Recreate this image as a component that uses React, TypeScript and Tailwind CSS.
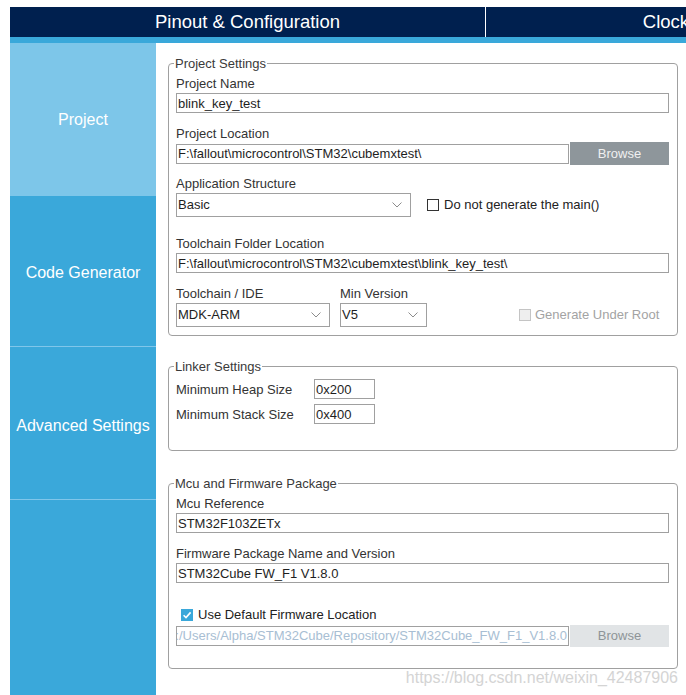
import React from 'react';

const Chevron = () => (
  <svg width="10" height="6" viewBox="0 0 10 6" className="shrink-0">
    <path d="M0.5 0.5 L5 5 L9.5 0.5" stroke="#8c8c8c" strokeWidth="1" fill="none" />
  </svg>
);

const TextBox = ({ value, className = '' }: { value: string; className?: string }) => (
  <div
    className={`flex h-[20px] items-center border border-[#a0a0a0] bg-white px-[1px] text-[13px] leading-[15px] text-[#1e1e1e] whitespace-nowrap overflow-hidden ${className}`}
  >
    {value}
  </div>
);

const Select = ({ value, className = '' }: { value: string; className?: string }) => (
  <div
    className={`flex h-[24px] items-center justify-between border border-[#a0a0a0] bg-white pl-[1px] pr-[8px] text-[13px] text-[#1e1e1e] ${className}`}
  >
    <span>{value}</span>
    <Chevron />
  </div>
);

const Label = ({ children, className = '' }: { children: React.ReactNode; className?: string }) => (
  <div className={`text-[13px] leading-[15px] text-[#333] ${className}`}>{children}</div>
);

const Group = ({
  title,
  className = '',
  children,
}: {
  title: string;
  className?: string;
  children: React.ReactNode;
}) => (
  <fieldset className={`rounded-[4px] border border-[#a0a0a0] pl-[7px] pr-[8px] pt-[5px] ${className}`}>
    <legend className="ml-[-2px] px-[1px] text-[13px] leading-[15px] text-[#3a3a3a]">{title}</legend>
    {children}
  </fieldset>
);

const SideItem = ({
  label,
  className = '',
}: {
  label: string;
  className?: string;
}) => (
  <div className={`flex items-center justify-center text-[16px] text-white ${className}`}>{label}</div>
);

export default function App() {
  return (
    <div className="h-[695px] w-[686px] overflow-hidden bg-white pl-[10px] pt-[7px] font-['Liberation_Sans',Arial,sans-serif]">
      {/* top tabs */}
      <div className="flex h-[30px] w-[951px] bg-[#00204f] text-[18.5px] text-white">
        <div className="flex w-[475px] items-center justify-center">Pinout &amp; Configuration</div>
        <div className="w-px bg-white" />
        <div className="flex w-[475px] items-center justify-center">Clock Configuration</div>
      </div>
      <div className="h-[6px] bg-[#3aa8da]" />

      <div className="flex h-[652px]">
        {/* sidebar */}
        <div className="flex w-[146px] flex-col bg-[#3aa8da]">
          <SideItem label="Project" className="h-[153px] bg-[#7dc6e9]" />
          <SideItem label="Code Generator" className="h-[150px] pt-[4px]" />
          <div className="h-px bg-[#80c6ea]" />
          <SideItem label="Advanced Settings" className="h-[152px] pt-[6px]" />
          <div className="h-px bg-[#80c6ea]" />
          <div className="flex-1" />
        </div>

        {/* settings */}
        <div className="flex-1 pl-[12px] pr-[8px] pt-[13px]">
          <Group title="Project Settings" className="pb-[8px]">
            <Label>Project Name</Label>
            <TextBox value="blink_key_test" className="mt-[2px]" />

            <Label className="mt-[13px]">Project Location</Label>
            <div className="mt-[1px] flex h-[23px] items-center gap-px">
              <TextBox value="F:\fallout\microcontrol\STM32\cubemxtest\" className="w-[393px]" />
              <div className="flex h-[23px] flex-1 items-center justify-center bg-[#8e969b] text-[13px] text-[#f0f0f0]">
                Browse
              </div>
            </div>

            <Label className="mt-[11px]">Application Structure</Label>
            <div className="mt-[2px] flex items-center">
              <Select value="Basic" className="w-[235px]" />
              <div className="ml-[16px] h-[12px] w-[12px] border border-[#333] bg-white" />
              <span className="ml-[5px] text-[13px] text-[#222]">Do not generate the main()</span>
            </div>

            <Label className="mt-[19px]">Toolchain Folder Location</Label>
            <TextBox value="F:\fallout\microcontrol\STM32\cubemxtest\blink_key_test\" className="mt-[2px]" />

            <div className="mt-[13px] flex items-end">
              <div className="flex w-[154px] flex-col">
                <Label>Toolchain / IDE</Label>
                <Select value="MDK-ARM" className="mt-[2px]" />
              </div>
              <div className="ml-[10px] flex w-[87px] flex-col">
                <Label>Min Version</Label>
                <Select value="V5" className="mt-[2px]" />
              </div>
              <div className="ml-[92px] flex h-[24px] items-center">
                <div className="h-[12px] w-[12px] border border-[#c4c4c4] bg-[#eeeeee]" />
                <span className="ml-[4px] text-[13px] text-[#a3a3a3]">Generate Under Root</span>
              </div>
            </div>
          </Group>

          <Group title="Linker Settings" className="mt-[23px] pb-[26px]">
            <div className="flex h-[20px] items-center">
              <Label className="w-[138px]">Minimum Heap Size</Label>
              <TextBox value="0x200" className="w-[61px]" />
            </div>
            <div className="mt-[5px] flex h-[20px] items-center">
              <Label className="w-[138px]">Minimum Stack Size</Label>
              <TextBox value="0x400" className="w-[61px]" />
            </div>
          </Group>

          <Group title="Mcu and Firmware Package" className="mt-[25px] pb-[21px]">
            <Label>Mcu Reference</Label>
            <TextBox value="STM32F103ZETx" className="mt-[2px]" />

            <Label className="mt-[13px]">Firmware Package Name and Version</Label>
            <TextBox value="STM32Cube FW_F1 V1.8.0" className="mt-[2px]" />

            <div className="mt-[24px] flex h-[15px] items-center pl-[5px]">
              <div className="flex h-[12px] w-[12px] items-center justify-center bg-[#3aa8da]">
                <svg width="12" height="12" viewBox="0 0 12 12">
                  <path d="M2.6 6.2 L5 8.6 L9.6 3.4" stroke="#fff" strokeWidth="1.6" fill="none" />
                </svg>
              </div>
              <span className="ml-[5px] text-[13px] text-[#222]">Use Default Firmware Location</span>
            </div>
            <div className="mt-[3px] flex h-[22px] items-center gap-px">
              <div className="flex h-[20px] w-[393px] items-center justify-end overflow-hidden whitespace-nowrap border border-[#a0a0a0] bg-white pr-[1px] text-[13px] text-[#a8bed3]">
                <span className="shrink-0">C:/Users/Alpha/STM32Cube/Repository/STM32Cube_FW_F1_V1.8.0</span>
              </div>
              <div className="flex h-[22px] flex-1 items-center justify-center bg-[#e1e4e6] text-[13px] text-[#8e9498]">
                Browse
              </div>
            </div>
          </Group>

          <div className="text-right text-[16px] leading-[18px] text-[#d4d4d4]">
            https://blog.csdn.net/weixin_42487906
          </div>
        </div>
      </div>
    </div>
  );
}
